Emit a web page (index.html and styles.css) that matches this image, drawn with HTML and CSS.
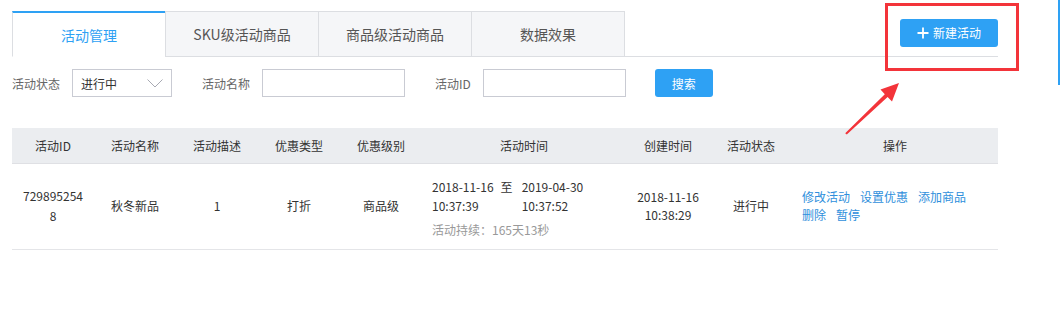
FILE: index.html
```html
<!DOCTYPE html>
<html lang="zh-CN">
<head>
    <meta charset="UTF-8">
    <title>活动管理</title>
    <link rel="stylesheet" href="styles.css">
</head>
<body>
    <div class="page">
        <div class="tab-bar">
            <div class="tab active">活动管理</div>
            <div class="tab">SKU级活动商品</div>
            <div class="tab">商品级活动商品</div>
            <div class="tab">数据效果</div>
            <button class="btn-new">
                <svg width="12" height="12" viewBox="0 0 12 12"><path d="M6 0.5V11.5M0.5 6H11.5" stroke="#fff" stroke-width="1.8"/></svg>
                新建活动
            </button>
        </div>

        <div class="filter-bar">
            <span class="filter-label">活动状态</span>
            <div class="select">
                <span>进行中</span>
                <svg width="16" height="9" viewBox="0 0 16 9"><polyline points="0.5,0.5 8,8 15.5,0.5" fill="none" stroke="#a8aab3" stroke-width="1"/></svg>
            </div>
            <span class="filter-label gap">活动名称</span>
            <input class="input" type="text">
            <span class="filter-label gap">活动ID</span>
            <input class="input" type="text">
            <button class="btn-search">搜索</button>
        </div>

        <table class="table">
            <colgroup>
                <col style="width: 82px"><col style="width: 82px"><col style="width: 82px">
                <col style="width: 82px"><col style="width: 82px"><col style="width: 204px">
                <col style="width: 84px"><col style="width: 82px"><col style="width: 206px">
            </colgroup>
            <thead>
                <tr>
                    <th>活动ID</th>
                    <th>活动名称</th>
                    <th>活动描述</th>
                    <th>优惠类型</th>
                    <th>优惠级别</th>
                    <th>活动时间</th>
                    <th>创建时间</th>
                    <th>活动状态</th>
                    <th>操作</th>
                </tr>
            </thead>
            <tbody>
                <tr>
                    <td class="id-cell">7298952548</td>
                    <td>秋冬新品</td>
                    <td>1</td>
                    <td>打折</td>
                    <td>商品级</td>
                    <td class="time-cell">
                        <div class="time-range">
                            <div>2018-11-16<br>10:37:39</div>
                            <span class="to">至</span>
                            <div>2019-04-30<br>10:37:52</div>
                        </div>
                        <div class="duration">活动持续：165天13秒</div>
                    </td>
                    <td>2018-11-16<br>10:38:29</td>
                    <td>进行中</td>
                    <td class="ops-cell">
                        <a href="#">修改活动</a><a href="#">设置优惠</a><a href="#">添加商品</a><br>
                        <a href="#">删除</a><a href="#">暂停</a>
                    </td>
                </tr>
            </tbody>
        </table>
    </div>

    <!-- 标注 -->
    <div class="mark-box"></div>
    <svg class="mark-arrow" width="1060" height="324" viewBox="0 0 1060 324">
        <polygon points="899,83 892,101.5 887.6,97 846.8,134.6 845.2,133.2 884.8,94.2 880.5,89.4" fill="#f3343a"/>
    </svg>
    <div class="edge-line"></div>
</body>
</html>
```

FILE: styles.css
```css
* {
    margin: 0;
    padding: 0;
    box-sizing: border-box;
}

body {
    font-family: "Microsoft YaHei", "Noto Sans CJK SC", sans-serif;
    font-size: 12px;
    color: #333;
    background: #fff;
    width: 1060px;
    height: 324px;
    overflow: hidden;
}

.page {
    width: 998px;
    padding: 11px 0 0 12px;
}

.tab-bar {
    display: flex;
    align-items: center;
    border-bottom: 1px solid #dcdee2;
    height: 46px;
}

.tab {
    width: 154px;
    height: 46px;
    margin-bottom: -1px;
    margin-left: -1px;
    display: flex;
    align-items: center;
    justify-content: center;
    font-size: 14px;
    color: #555;
    background: #f5f6f8;
    border: 1px solid #dcdee2;
}

.tab:first-child {
    margin-left: 0;
}

.tab.active {
    color: #2ea1f4;
    background: #fff;
    border-top: 2px solid #2ea1f4;
    border-bottom-color: #fff;
}

.btn-new {
    margin-left: auto;
    margin-bottom: 2px;
    width: 98px;
    height: 28px;
    border: none;
    border-radius: 3px;
    background: #2ea1f4;
    color: #fff;
    font-family: inherit;
    font-size: 12px;
    display: flex;
    align-items: center;
    justify-content: center;
    gap: 4px;
}

.filter-bar {
    display: flex;
    align-items: center;
    margin-top: 12px;
    height: 28px;
}

.filter-label {
    color: #666;
    margin-right: 12px;
}

.filter-label.gap {
    margin-left: 30px;
}

.select {
    width: 100px;
    height: 28px;
    border: 1px solid #c9cbd3;
    display: flex;
    align-items: center;
    justify-content: space-between;
    padding: 0 8px 0 8px;
    color: #333;
}

.input {
    width: 143px;
    height: 28px;
    border: 1px solid #c9cbd3;
    outline: none;
}

.btn-search {
    margin-left: 29px;
    width: 58px;
    height: 28px;
    border: none;
    border-radius: 3px;
    background: #2ea1f4;
    color: #fff;
    font-family: inherit;
    font-size: 12px;
}

.table {
    margin-top: 31px;
    width: 986px;
    table-layout: fixed;
    border-collapse: collapse;
}

.table th {
    height: 35px;
    background: #ebedf0;
    font-weight: normal;
    color: #333;
    border-bottom: 1px solid #dfe0e4;
}

.table td {
    height: 86px;
    text-align: center;
    line-height: 18px;
    border-bottom: 1px solid #e4e5e8;
    padding: 0 10px;
}

.table td.id-cell {
    word-break: break-all;
    line-height: 20px;
    padding: 0 8px;
}

.table td.time-cell {
    text-align: left;
    line-height: 19px;
    padding-top: 4px;
}

.time-range {
    display: flex;
    gap: 7px;
}

.time-range .to {
    margin-right: 2px;
}

.duration {
    margin-top: 5px;
    color: #999;
}

.table td.ops-cell {
    text-align: left;
}

.ops-cell a {
    color: #2f8fdc;
    text-decoration: none;
    margin-right: 10px;
}

.mark-box {
    position: absolute;
    left: 885px;
    top: 3px;
    width: 134px;
    height: 68px;
    border: 3px solid #f3343a;
}

.mark-arrow {
    position: absolute;
    left: 0;
    top: 0;
    pointer-events: none;
}

.edge-line {
    position: absolute;
    left: 1058px;
    top: 0;
    width: 2px;
    height: 85px;
    background: #2ea1f4;
}
```
